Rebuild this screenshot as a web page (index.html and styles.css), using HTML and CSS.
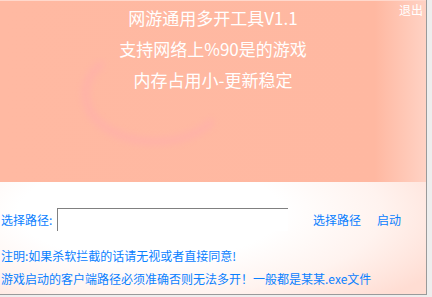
FILE: index.html
```
<!DOCTYPE html>
<html lang="zh">
<head>
<meta charset="utf-8">
<link rel="stylesheet" href="styles.css">
</head>
<body>
<div class="window">
  <div class="banner">
    <svg class="deco" width="300" height="182" viewBox="0 0 300 182" aria-hidden="true">
      <defs>
        <filter id="blur"><feGaussianBlur stdDeviation="3"/></filter>
      </defs>
      <path d="M100 64 A64 44 0 1 0 210 122" fill="none" stroke="#ffaab0" stroke-width="9" stroke-linecap="round" opacity="0.4" filter="url(#blur)"/>
      <path d="M30 52 L88 52" fill="none" stroke="#ffaab0" stroke-width="7" stroke-linecap="round" opacity="0.35" filter="url(#blur)"/>
    </svg>
    <a class="quit">退出</a>
    <div class="titles">
      <p>网游通用多开工具V1.1</p>
      <p>支持网络上%90是的游戏</p>
      <p>内存占用小-更新稳定</p>
    </div>
  </div>
  <div class="panel">
    <div class="path-row">
      <span class="label">选择路径:</span>
      <span class="input"></span>
      <a class="btn btn-choose">选择路径</a>
      <a class="btn btn-start">启动</a>
    </div>
    <p class="note">注明:如果杀软拦截的话请无视或者直接同意!</p>
    <p class="note">游戏启动的客户端路径必须准确否则无法多开！一般都是某某.exe文件</p>
  </div>
</div>
</body>
</html>
```
FILE: styles.css
```
html, body {
  margin: 0;
  padding: 0;
}
body {
  width: 432px;
  height: 297px;
  background: #eeeeee;
  overflow: hidden;
  font-family: "Noto Sans CJK SC", "Noto Sans", sans-serif;
}
.window {
  width: 426px;
  height: 294px;
  border-right: 1px solid #9a9a9a;
  border-bottom: 1px solid #9a9a9a;
  display: flex;
  flex-direction: column;
}
.banner {
  position: relative;
  height: 182px;
  flex: none;
  background: linear-gradient(90deg, #ffb9a2 0%, #ffb8a1 88%, #ffd2c4 100%);
  border-top: 1px solid #ffd8cc;
  box-sizing: border-box;
  overflow: hidden;
}
.deco {
  position: absolute;
  left: 0;
  top: 0;
}
.titles {
  position: relative;
  padding-top: 1px;
  text-align: center;
  color: #ffffff;
  font-size: 17px;
  line-height: 31px;
}
.titles p {
  margin: 0;
}
.quit {
  position: absolute;
  right: 3px;
  top: 1px;
  color: #ffffff;
  font-size: 12px;
  line-height: 16px;
}
.panel {
  flex: 1;
  padding-top: 26px;
  background: radial-gradient(ellipse 330px 120px at 150px 30px, #ffffff 40%, #fff3ef 70%, #ffddd3 100%);
  color: #0a80ff;
  font-size: 12px;
}
.path-row {
  display: flex;
  align-items: center;
  height: 23px;
  margin-bottom: 13px;
}
.label {
  margin-left: 1px;
  width: 56px;
  flex: none;
}
.input {
  width: 230px;
  height: 22px;
  background: #ffffff;
  border-top: 1px solid #808080;
  border-left: 1px solid #808080;
  flex: none;
}
.btn {
  flex: none;
}
.btn-choose {
  margin-left: 25px;
}
.btn-start {
  margin-left: 16px;
}
.note {
  margin: 0 0 0 1px;
  line-height: 23px;
  white-space: nowrap;
}
```
